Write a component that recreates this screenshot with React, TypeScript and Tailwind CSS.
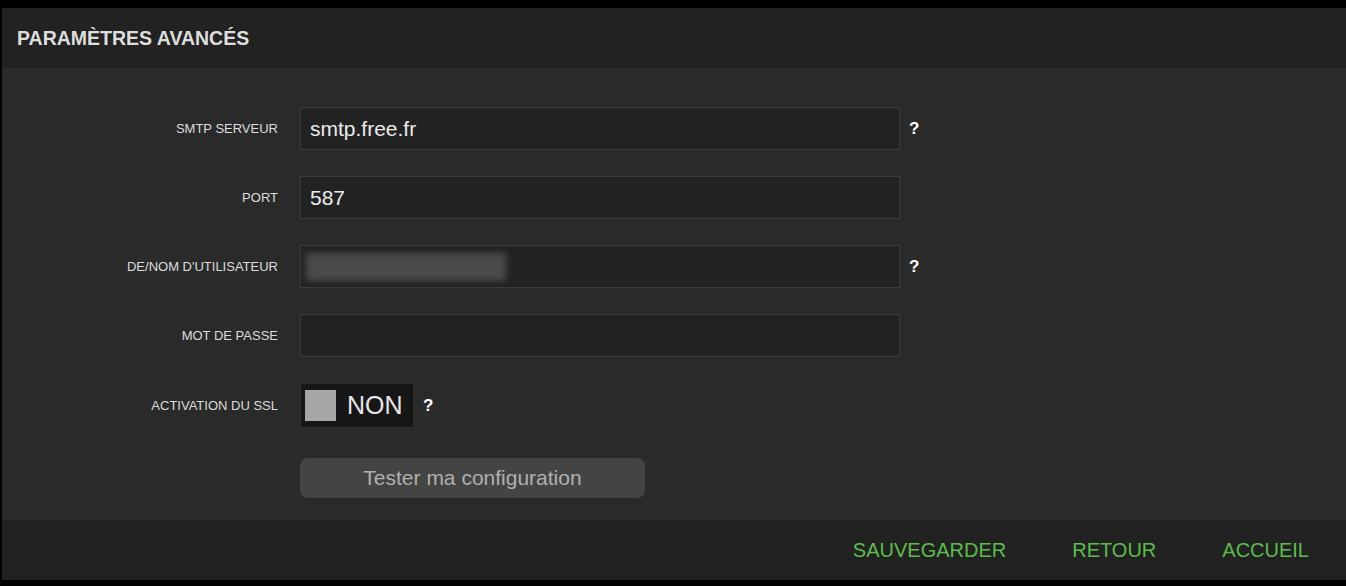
const rows = [
  { label: "SMTP SERVEUR", value: "smtp.free.fr", help: true },
  { label: "PORT", value: "587", help: false },
  { label: "DE/NOM D'UTILISATEUR", value: "", blurred: true, help: true },
  { label: "MOT DE PASSE", value: "", help: false },
];

function Help() {
  return <span className="ml-[9px] text-[17px] font-bold text-white leading-none">?</span>;
}

export default function App() {
  return (
    <div className="h-[586px] w-[1346px] bg-black pt-2 pb-[6px] pl-[2px] font-['Liberation_Sans',Arial,sans-serif]">
      <div className="flex h-full flex-col">
        <div className="flex h-[60px] items-center bg-[#222222] pl-[15px] pt-[1px]">
          <h1 className="text-[19.5px] font-bold text-[#dedede]">PARAMÈTRES AVANCÉS</h1>
        </div>
        <div className="flex flex-1 flex-col bg-[#2a2a2a] pt-[39px]">
          {rows.map((r) => (
            <div key={r.label} className="mb-[26px] flex items-center">
              <label className="w-[276px] text-right text-[13px] text-[#dcdcdc]">{r.label}</label>
              <div className="ml-[22px] flex h-[43px] w-[600px] items-center border border-[#3b3b3b] bg-[#222222] px-[9px] text-[21px] text-[#ececec]">
                {r.blurred ? <div className="h-[28px] w-[200px] -ml-[4px] bg-[#4a4a4a] blur-[3px]" /> : r.value}
              </div>
              {r.help && <Help />}
            </div>
          ))}
          <div className="flex items-center">
            <label className="w-[276px] text-right text-[13px] text-[#dcdcdc]">ACTIVATION DU SSL</label>
            <div className="ml-[22px] flex h-[45px] w-[114px] items-center border border-[#2e2e2e] bg-[#161616] pl-[4px]">
              <div className="h-[31px] w-[31px] bg-[#a7a7a7]" />
              <span className="ml-[11px] text-[25px] text-[#e6e6e6]">NON</span>
            </div>
            <Help />
          </div>
          <div className="ml-[298px] mt-[30px]">
            <button className="h-[40px] w-[345px] rounded-[8px] bg-[#444444] text-[21px] text-[#b0b0b0]">Tester ma configuration</button>
          </div>
        </div>
        <div className="flex h-[60px] items-center justify-end gap-[66px] bg-[#212121] pr-[37px] text-[20px] text-[#5cbd4a]">
          <a>SAUVEGARDER</a>
          <a>RETOUR</a>
          <a>ACCUEIL</a>
        </div>
      </div>
    </div>
  );
}
